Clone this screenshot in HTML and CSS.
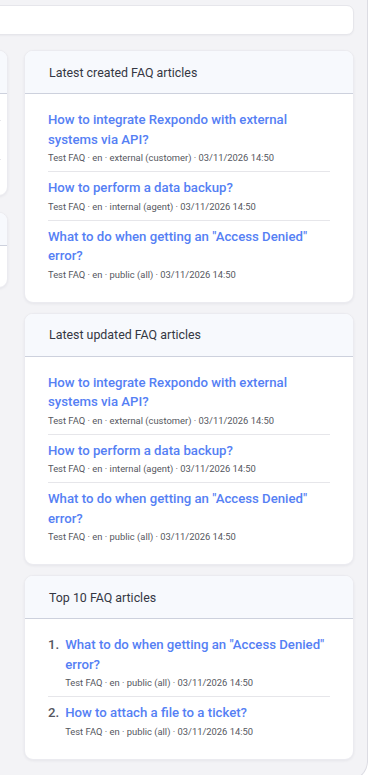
FILE: index.html
```html
<!DOCTYPE html>
<html lang="en">
<head>
<meta charset="utf-8">
<title>FAQ overview</title>
<link rel="stylesheet" href="styles.css">
</head>
<body>
<div class="panel">
  <div class="content">
    <div class="search"></div>
    <div class="columns">
      <div class="col-left">
        <div class="card">
          <div class="card-head"></div>
          <div class="left-body">
            <div class="left-row r1"></div>
            <div class="left-row r2"></div>
            <div class="left-row r3"></div>
          </div>
        </div>
        <div class="card">
          <div class="card-head short"></div>
          <div class="left-body b2"></div>
        </div>
      </div>
      <div class="col-right">
        <div class="card">
          <div class="card-head">Latest created FAQ articles</div>
          <div class="card-body">
            <div class="item">
              <a href="#">How to integrate Rexpondo with external systems via API?</a>
              <div class="meta">Test FAQ · en · external (customer) · 03/11/2026 14:50</div>
            </div>
            <div class="item">
              <a href="#">How to perform a data backup?</a>
              <div class="meta">Test FAQ · en · internal (agent) · 03/11/2026 14:50</div>
            </div>
            <div class="item">
              <a href="#">What to do when getting an "Access Denied" error?</a>
              <div class="meta">Test FAQ · en · public (all) · 03/11/2026 14:50</div>
            </div>
          </div>
        </div>
        <div class="card">
          <div class="card-head">Latest updated FAQ articles</div>
          <div class="card-body">
            <div class="item">
              <a href="#">How to integrate Rexpondo with external systems via API?</a>
              <div class="meta">Test FAQ · en · external (customer) · 03/11/2026 14:50</div>
            </div>
            <div class="item">
              <a href="#">How to perform a data backup?</a>
              <div class="meta">Test FAQ · en · internal (agent) · 03/11/2026 14:50</div>
            </div>
            <div class="item">
              <a href="#">What to do when getting an "Access Denied" error?</a>
              <div class="meta">Test FAQ · en · public (all) · 03/11/2026 14:50</div>
            </div>
          </div>
        </div>
        <div class="card">
          <div class="card-head">Top 10 FAQ articles</div>
          <ol class="card-body rank-list">
            <li class="item rank-item">
              <span class="num">1.</span>
              <div class="rank-main">
                <a href="#">What to do when getting an "Access Denied" error?</a>
                <div class="meta">Test FAQ · en · public (all) · 03/11/2026 14:50</div>
              </div>
            </li>
            <li class="item rank-item">
              <span class="num">2.</span>
              <div class="rank-main">
                <a href="#">How to attach a file to a ticket?</a>
                <div class="meta">Test FAQ · en · public (all) · 03/11/2026 14:50</div>
              </div>
            </li>
          </ol>
        </div>
      </div>
    </div>
  </div>
</div>
</body>
</html>
```
FILE: styles.css
```css
html, body {
  margin: 0;
  padding: 0;
  background: #ffffff;
  overflow: hidden;
}
body {
  font-family: Roboto, "Liberation Sans", sans-serif;
}
.panel {
  width: 368px;
  height: 781px;
  box-sizing: border-box;
  background: #f3f3f6;
  border-right: 1px solid #dcdce3;
  border-bottom: 1px solid #dcdce3;
  border-bottom-right-radius: 20px;
  padding: 5px 13px 0 0;
  overflow: hidden;
}
.content {
  margin-left: -200px;
}
.search {
  height: 30px;
  box-sizing: border-box;
  background: #ffffff;
  border: 1px solid #e6e6eb;
  border-radius: 7px;
  box-shadow: 0 1px 2px rgba(20, 20, 40, 0.04);
}
.columns {
  display: flex;
  gap: 16px;
  margin-top: 15px;
  align-items: flex-start;
}
.col-left {
  flex: none;
  width: 208px;
  display: flex;
  flex-direction: column;
  gap: 16px;
}
.col-right {
  flex: none;
  width: 330px;
  display: flex;
  flex-direction: column;
  gap: 10px;
}
.card {
  background: #ffffff;
  border: 1px solid #ebebf0;
  border-radius: 9px;
  box-shadow: 0 1px 3px rgba(20, 20, 50, 0.06);
  overflow: hidden;
}
.card-head {
  height: 42px;
  display: flex;
  align-items: center;
  padding: 0 24px;
  background: #f7f9fd;
  border-bottom: 1px solid #cdd1dd;
  font-size: 12.4px;
  color: #343743;
}
.card-head.short {
  height: 32px;
}
.left-body {
  padding: 0 6px 0 23px;
}
.left-row {
  border-bottom: 1px solid #e6e6ea;
}
.left-row.r1 { height: 26px; }
.left-row.r2 { height: 38px; }
.left-row.r3 { height: 35px; border-bottom: none; }
.left-body.b2 { height: 41px; }
.card-body {
  margin: 0;
  padding: 10px 23px 14px;
  list-style: none;
}
.item {
  padding: 6px 0;
  border-bottom: 1px solid #e6e6ea;
}
.item:last-child {
  border-bottom: none;
}
.item a {
  display: block;
  font-size: 13.2px;
  line-height: 19.5px;
  font-weight: 500;
  color: #5580f4;
  text-decoration: none;
}
.meta {
  margin-top: 2px;
  font-size: 9.4px;
  line-height: 14px;
  color: #555760;
}
.rank-item {
  display: flex;
  align-items: flex-start;
}
.num {
  flex: none;
  margin-right: 6px;
  font-size: 13.2px;
  line-height: 19.5px;
  font-weight: 500;
  color: #55575f;
}
.rank-main {
  flex: 1;
  min-width: 0;
}
```
